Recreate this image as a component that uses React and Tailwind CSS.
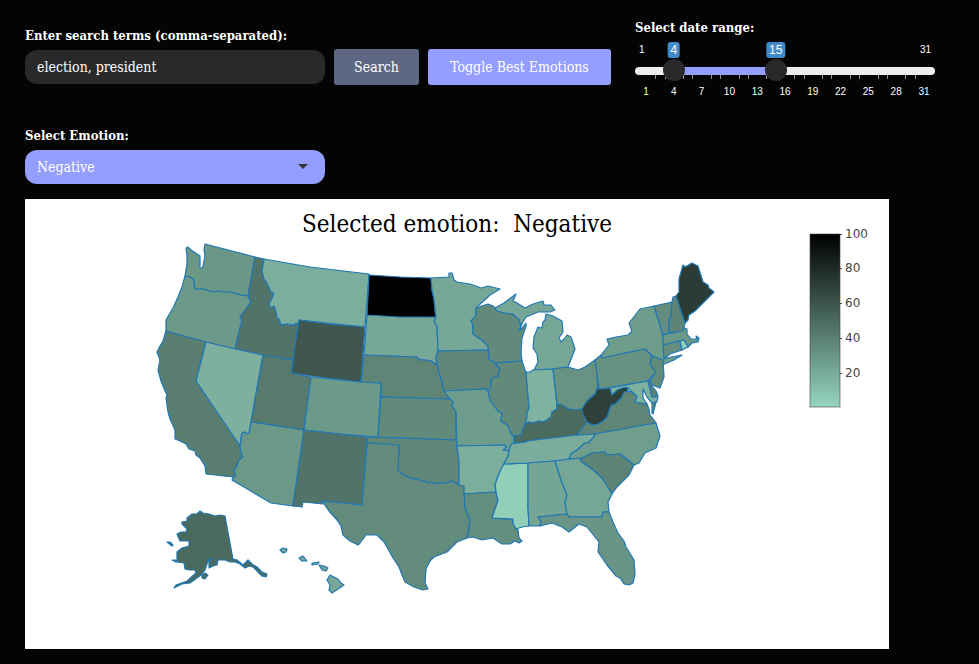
import { useState } from "react";

const STATES = [
  ["WA", "#6b9786", "186,248 188,247 191,250 200,256 200,262 200,268 202,268 203,266 204,261 205,256 204,250 205,244 255,257 248,296 242,295 235,293 227,292 218,292 209,291 203,289 195,289 194,283 190,279 185,276 187,264 187,256"],
  ["OR", "#6d9a88", "185,276 190,277 194,280 194,286 195,289 203,289 209,291 213,292 218,291 222,292 230,292 240,295 248,296 251,302 246,309 240,317 242,320 235,349 200,341 166,331 166,320 173,308 178,297 182,287"],
  ["ID", "#527367", "255,257 264,259 262,271 264,279 267,283 271,292 274,293 272,298 269,304 270,307 272,307 274,306 276,312 277,318 279,319 281,325 286,324 290,325 294,325 296,323 298,325 299,320 293,360 263,355 235,349 242,320 240,317 246,309 251,302 248,296"],
  ["MT", "#7bae9c", "264,259 310,267 369,274 365,327 299,320 298,325 296,323 294,325 290,324 286,324 281,325 279,319 277,318 276,312 274,306 272,307 270,307 269,304 272,298 274,293 271,292 267,283 264,279 262,271"],
  ["WY", "#3f574e", "299,320 330,324 365,327 361,382 326,378 291,373"],
  ["CA", "#5a7f71", "166,331 206,342 196,381 240,446 241,453 243,457 239,460 237,466 234,470 235,474 236,476 233,477 206,474 205,466 200,458 196,455 195,451 189,449 186,444 180,441 175,439 175,430 170,419 168,412 167,405 166,398 167,395 165,391 161,381 158,370 160,360 157,352 160,346 163,341"],
  ["NV", "#7db09e", "206,342 235,349 263,355 251,422 249,433 247,434 245,432 242,433 241,438 240,446 196,381"],
  ["UT", "#577a6d", "263,355 293,360 291,373 311,377 304,430 251,422"],
  ["AZ", "#6b9887", "251,422 304,430 293,506 271,503 232,480 233,477 236,476 235,474 234,470 237,466 239,460 243,457 241,453 240,446 242,433 245,432 247,434 249,433"],
  ["CO", "#6c9a89", "311,377 361,382 381,383 378,437 340,434 304,430"],
  ["NM", "#527368", "304,430 367,437 362,505 322,501 323,504 303,502 302,507 293,506"],
  ["SD", "#77a897", "367,315 436,317 434,322 437,326 438,351 436,357 437,365 431,361 425,360 420,360 416,357 364,355"],
  ["ND", "#000000", "369,275 400,277 431,278 432,290 434,299 435,309 436,317 400,317 367,315"],
  ["NE", "#5f8577", "364,355 416,357 420,360 425,360 431,361 437,365 440,375 442,382 443,388 446,394 450,399 381,397 381,383 361,382"],
  ["KS", "#628a7b", "381,397 450,399 453,402 452,406 456,411 456,440 378,437"],
  ["OK", "#608678", "367,437 456,440 457,446 459,461 459,485 452,481 446,483 440,483 435,484 432,482 428,483 424,481 420,481 418,479 413,479 408,477 404,475 401,473 398,471 399,445 367,443"],
  ["TX", "#628b7c", "367,443 399,445 398,471 401,473 404,475 408,477 413,479 418,479 420,481 424,481 428,483 432,482 435,484 440,483 446,483 452,481 459,485 464,486 465,507 470,520 469,529 467,538 457,542 447,552 434,557 430,561 426,569 425,583 428,589 423,590 414,587 405,582 402,575 399,567 393,558 388,549 384,542 377,535 366,535 360,543 358,545 350,541 343,535 341,526 337,520 329,511 322,501 362,505"],
  ["MN", "#77a897", "431,278 449,277 449,273 452,273 454,280 457,282 470,284 476,286 481,288 488,286 500,289 490,295 478,306 476,308 476,316 471,321 473,325 473,334 483,341 488,346 488,350 438,351 437,326 434,322 436,317 435,309 434,299 432,290"],
  ["IA", "#5f8678", "438,351 488,350 489,359 495,363 500,369 498,376 491,379 491,387 488,391 485,389 444,391 442,382 440,375 437,365 436,357"],
  ["MO", "#6f9d8c", "444,391 485,389 488,391 490,400 495,407 498,411 502,413 501,421 507,425 509,428 511,434 514,437 514,443 511,445 509,451 503,450 506,447 505,445 457,446 456,411 452,406 453,402 450,399"],
  ["AR", "#7cae9c", "457,446 505,445 506,447 503,450 509,451 508,456 505,462 501,469 497,479 495,485 496,492 464,494 464,486 459,485 459,461"],
  ["LA", "#648e7e", "464,494 496,492 498,501 495,509 492,518 513,519 513,523 516,528 518,530 519,538 522,541 519,543 515,541 510,544 502,544 493,538 482,540 473,537 467,538 469,529 470,520 465,507"],
  ["MS", "#92cfb9", "504,464 528,463 528,507 529,526 522,527 516,529 513,523 513,519 492,518 495,509 498,501 496,492 495,485 497,479 501,469"],
  ["WI", "#628a7b", "476,308 488,304 493,306 495,308 497,311 505,313 513,314 517,318 519,319 521,326 519,331 522,328 526,323 526,326 522,338 521,352 522,361 495,363 489,359 488,346 483,341 473,334 473,325 471,321 476,316"],
  ["UP", "#76a695", "495,308 504,303 516,294 513,301 517,303 525,308 533,304 543,301 544,305 551,305 555,310 550,312 538,312 526,317 523,322 521,326 519,319 517,318 513,314 505,313 497,311"],
  ["MI", "#76a695", "546,314 553,316 562,321 563,332 559,338 561,342 564,339 567,335 571,337 575,349 568,367 553,369 534,370 538,362 537,354 533,348 534,337 538,327 542,328 543,322 545,320"],
  ["IL", "#618a7b", "495,363 522,361 526,373 529,408 527,413 527,418 525,424 521,435 514,436 511,434 509,428 507,425 501,421 502,413 498,411 495,407 490,400 488,391 491,387 491,379 498,376 500,369"],
  ["IN", "#7fb29f", "526,372 530,372 533,370 553,369 557,404 557,409 552,412 551,417 547,420 543,422 539,421 533,423 529,422 525,424 527,418 527,413 529,408"],
  ["OH", "#689383", "553,369 568,367 578,370 585,367 595,360 598,378 598,387 595,394 587,401 585,407 582,409 575,410 568,409 562,405 557,404"],
  ["KY", "#4c6b5f", "514,443 514,436 521,435 525,424 529,422 533,423 539,421 543,422 547,420 551,417 552,412 557,409 557,404 562,405 568,409 575,410 582,409 583,414 589,422 577,435 527,441 526,442"],
  ["TN", "#7aad9b", "511,444 526,442 527,441 577,435 595,434 594,437 588,443 585,443 577,450 571,454 569,459 555,461 528,463 504,464 505,462 508,456 509,451"],
  ["AL", "#75a594", "528,463 555,461 561,480 567,495 565,502 566,509 567,514 538,517 541,521 540,526 529,526 528,507"],
  ["GA", "#76a695", "555,461 569,459 582,458 582,462 592,469 602,478 608,487 612,494 608,502 609,512 603,512 602,517 569,517 567,514 566,509 565,502 567,495 561,480"],
  ["FL", "#699586", "538,517 567,514 569,517 602,517 603,512 609,512 613,522 618,533 624,541 626,547 634,560 635,574 633,583 629,585 624,584 620,578 616,576 607,565 598,552 599,542 587,527 579,524 574,528 569,532 562,527 552,523 540,526 541,521"],
  ["VA", "#5f8577", "577,435 587,422 593,425 603,421 607,417 611,405 615,404 621,398 624,392 628,391 632,392 637,396 635,402 641,403 647,404 649,409 650,415 654,420 656,423 595,434"],
  ["WV", "#2e4039", "597,378 599,389 610,388 612,395 617,390 622,388 627,387 628,391 624,392 621,398 615,404 611,405 607,417 603,421 598,424 593,425 587,422 583,414 582,409 587,401 595,394 598,387"],
  ["NC", "#6f9e8d", "595,434 656,423 660,436 656,448 645,453 639,463 634,465 620,454 607,455 605,452 592,453 582,458 569,459 571,454 577,450 585,443 588,443 594,437"],
  ["SC", "#5d8375", "582,458 592,453 605,452 607,455 620,454 634,465 629,475 617,487 612,494 608,487 602,478 592,469 582,462 580,460"],
  ["NY", "#6f9d8c", "602,358 601,355 609,345 607,339 616,337 628,335 632,331 629,323 640,309 654,306 660,325 663,336 665,357 667,358 682,355 674,360 662,365 663,360 652,356 645,349"],
  ["PA", "#679181", "595,360 601,355 602,358 645,349 652,356 650,364 656,372 648,381 599,389"],
  ["NJ", "#628b7c", "652,356 663,360 664,377 660,388 652,385 650,381 656,372 650,364"],
  ["MD", "#7eb29f", "610,388 648,381 652,397 658,397 657,402 652,403 647,397 645,393 643,389 643,398 647,404 641,403 635,402 637,396 632,392 627,387 622,388 617,390 612,395"],
  ["DE", "#5c8173", "648,381 650,380 652,386 656,391 658,396 652,397"],
  ["Eastern Shore", "#5f8577", "652,403 656,402 653,414 652,413"],
  ["VT", "#648d7e", "654,306 672,302 671,316 669,320 669,333 663,335 660,325"],
  ["NH", "#5e8476", "672,302 673,297 676,296 685,323 684,328 682,331 669,333 669,320 671,316"],
  ["ME", "#2b3b35", "676,296 679,292 679,279 683,265 685,267 692,263 698,266 703,282 708,285 709,288 714,292 707,299 700,306 695,311 689,315 688,320 685,323"],
  ["MA", "#6b9786", "663,335 682,331 684,328 687,329 687,334 691,339 697,339 696,336 699,338 698,342 692,343 688,347 684,340 663,345"],
  ["CT", "#648d7e", "663,345 680,341 682,350 670,354 664,359"],
  ["RI", "#92d0ba", "680,341 684,340 688,347 682,350"],
  ["AK", "#4b6a5e", "200,511 203,513 209,514 215,516 220,515 225,516 233,559 237,560 243,565 248,560 252,564 257,567 262,572 267,574 266,577 262,576 258,572 253,567 249,566 245,568 240,564 235,562 230,562 225,560 218,560 217,565 213,566 209,568 209,562 212,558 208,561 205,570 201,575 190,583 182,584 174,588 176,585 187,581 196,573 195,570 189,570 185,569 184,563 177,562 177,558 177,552 182,548 189,546 189,541 180,541 177,534 181,532 186,532 187,529 182,524 182,522 187,521 187,518 192,514 197,514"],
  ["Kodiak", "#4b6a5e", "202,575 205,573 208,575 205,579 202,578"],
  ["St Lawrence", "#4b6a5e", "167,542 170,542 173,545 172,546"],
  ["Nunivak", "#4b6a5e", "172,560 177,560 176,562"],
  ["Kauai", "#77a897", "280,550 283,548 287,549 286,552 283,553"],
  ["Oahu", "#77a897", "299,558 303,556 307,561 302,561"],
  ["Molokai", "#77a897", "312,563 319,562 318,564 312,565"],
  ["Maui", "#77a897", "319,565 324,566 328,568 326,571 322,570"],
  ["Hawaii", "#77a897", "330,575 338,579 341,583 344,585 338,589 332,593 329,590 330,585 327,580"],
];

const SCALE = [[100, 234], [80, 268], [60, 303], [40, 338], [20, 373]];
const DAYS = Array.from({ length: 31 }, (_, i) => i + 1);

// Centre of a 22px thumb along the track
const at = (day) => `calc(11px + (100% - 22px) * ${(day - 1) / 30})`;

const thumb =
  "pointer-events-none absolute inset-x-0 top-0 m-0 h-[22px] w-full appearance-none bg-transparent [&::-webkit-slider-thumb]:pointer-events-auto [&::-webkit-slider-thumb]:size-[22px] [&::-webkit-slider-thumb]:appearance-none [&::-webkit-slider-thumb]:rounded-full [&::-webkit-slider-thumb]:bg-[#29292b]";

function DateRange() {
  const [from, setFrom] = useState(4);
  const [to, setTo] = useState(15);
  return (
    <fieldset className="w-[300px]">
      <legend className="text-[13px] leading-5 font-bold">Select date range:</legend>
      <div className="font-['Liberation_Sans',sans-serif]">
        <div className="relative mt-1 flex h-[17px] justify-between px-1 text-[10px] leading-4">
          <span>1</span>
          <span>31</span>
          {[from, to].map((day, i) => (
            <output
              key={i}
              className="absolute top-0 -translate-x-1/2 rounded-[3px] bg-[#428bca] px-[3px] text-[12px] leading-4"
              style={{ left: at(day) }}
            >
              {day}
            </output>
          ))}
        </div>
        <div className="relative h-[22px]">
          <div className="absolute inset-x-0 top-2 h-2 rounded-full bg-[#efedef]" />
          <div
            className="absolute top-2 h-2 bg-[#949eff]"
            style={{ left: at(from), right: `calc(100% - ${at(to).slice(4)})` }}
          />
          {DAYS.map((day) => (
            <span
              key={day}
              className={day % 3 === 1 ? "absolute top-4 h-2 w-px bg-black" : "absolute top-4 h-1 w-px bg-[#999]"}
              style={{ left: at(day) }}
            />
          ))}
          <input type="range" min="1" max="31" value={from} aria-label="Start day" className={thumb}
            onChange={(e) => setFrom(Math.min(+e.target.value, to))} />
          <input type="range" min="1" max="31" value={to} aria-label="End day" className={thumb}
            onChange={(e) => setTo(Math.max(+e.target.value, from))} />
        </div>
        <div className="mt-[5px] flex justify-between px-[3px] text-[10px] leading-3">
          {DAYS.filter((day) => day % 3 === 1).map((day) => (
            <span key={day} className="w-4 text-center">{day}</span>
          ))}
        </div>
      </div>
    </fieldset>
  );
}

function EmotionMap({ emotion }) {
  return (
    <figure className="mt-[15px] w-full max-w-[864px] bg-white">
      <svg viewBox="25 199 864 450" className="block w-full" role="img" aria-label="Emotion by state">
        <defs>
          <linearGradient id="scale" x1="0" y1="0" x2="0" y2="1">
            <stop offset="0" stopColor="#000" />
            <stop offset="1" stopColor="#95d5be" />
          </linearGradient>
        </defs>
        <text x="457" y="232" textAnchor="middle" className="fill-black text-[24px] whitespace-pre">
          {`Selected emotion:  ${emotion}`}
        </text>
        <g stroke="#1f77b4" strokeWidth="1.2" strokeLinejoin="round">
          {STATES.map(([name, fill, points]) => (
            <polygon key={name} fill={fill} points={points} />
          ))}
        </g>
        <rect x="810" y="234" width="30" height="173" fill="url(#scale)" stroke="#444" strokeOpacity="0.6" />
        <g className="fill-[#444] font-['DejaVu_Sans',sans-serif] text-[12px]">
          {SCALE.map(([value, y]) => (
            <g key={value}>
              <path d={`M840 ${y}.5h2`} stroke="#444" />
              <text x="845" y={y + 4}>{value}</text>
            </g>
          ))}
        </g>
      </svg>
    </figure>
  );
}

export default function App() {
  const [terms, setTerms] = useState("election, president");
  const [emotion, setEmotion] = useState("Negative");
  return (
    <main className="min-h-screen bg-[#040404] px-[25px] pt-[18px] pb-[15px] font-['Roboto_Slab','DejaVu_Serif_Condensed','DejaVu_Serif',serif] text-white">
      <div className="flex flex-wrap items-start">
        <form className="flex flex-wrap items-end pt-2" onSubmit={(e) => e.preventDefault()}>
          <div className="mr-[9px] w-[300px] pb-px">
            <label htmlFor="terms" className="block text-[13px] leading-5 font-bold">
              Enter search terms (comma-separated):
            </label>
            <input id="terms" value={terms} onChange={(e) => setTerms(e.target.value)}
              className="mt-1 block h-[34px] w-full rounded-xl bg-[#29292b] px-3 text-[14px]" />
          </div>
          <button className="mr-[9px] h-9 w-[85px] rounded-[3px] bg-[#5e6784] text-[14px]">Search</button>
          <button type="button" className="mr-6 h-9 w-[183px] rounded-[3px] bg-[#949eff] text-[14px]">
            Toggle Best Emotions
          </button>
        </form>
        <DateRange />
      </div>
      <div className="mt-7 w-[300px]">
        <label htmlFor="emotion" className="block text-[13px] leading-5 font-bold">Select Emotion:</label>
        <div className="relative mt-1">
          <select id="emotion" value={emotion} onChange={(e) => setEmotion(e.target.value)}
            className="block h-[34px] w-full appearance-none rounded-xl bg-[#949eff] px-3 text-[14px]">
            <option>Negative</option>
            <option>Positive</option>
          </select>
          <svg viewBox="0 0 10 5" className="pointer-events-none absolute top-[14px] right-[17px] h-[5px] w-[10px]" aria-hidden="true">
            <path d="M0 0h10L5 5z" fill="#333" />
          </svg>
        </div>
      </div>
      <EmotionMap emotion={emotion} />
    </main>
  );
}
